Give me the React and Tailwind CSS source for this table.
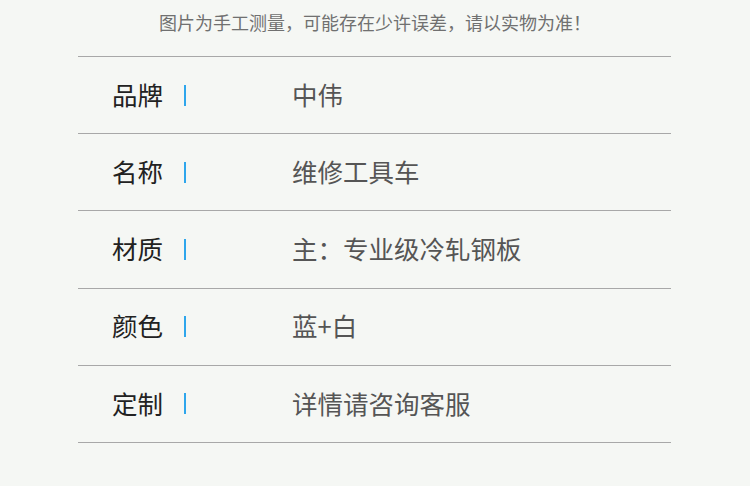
const rows = [
  { label: '品牌', value: '中伟' },
  { label: '名称', value: '维修工具车' },
  { label: '材质', value: '主：专业级冷轧钢板' },
  { label: '颜色', value: '蓝+白' },
  { label: '定制', value: '详情请咨询客服' },
];

export default function App() {
  return (
    <div
      className="w-[750px] h-[486px] bg-[#f5f7f4] overflow-hidden"
      style={{ fontFamily: '"Noto Sans CJK SC", "Noto Sans", sans-serif' }}
    >
      {/* Notice */}
      <div className="h-[56px] pt-[13px] text-center text-[18px] leading-[18px] text-[#707070]">
        图片为手工测量，可能存在少许误差，请以实物为准！
      </div>

      {/* Spec table */}
      <div className="mx-[78px] w-[593px] border-t border-[#a8a8a8]">
        {rows.map((row) => (
          <div
            key={row.label}
            className="h-[77.2px] flex items-center border-b border-[#a8a8a8]"
          >
            <span className="ml-[34px] w-[72px] pb-[3px] text-[25.5px] leading-none text-[#222222]">
              {row.label}
            </span>
            <span className="w-[2px] h-[21px] bg-[#2ea6ec]" />
            <span className="ml-[106px] pb-[3px] text-[25.5px] leading-none text-[#555555]">
              {row.value}
            </span>
          </div>
        ))}
      </div>
    </div>
  );
}
